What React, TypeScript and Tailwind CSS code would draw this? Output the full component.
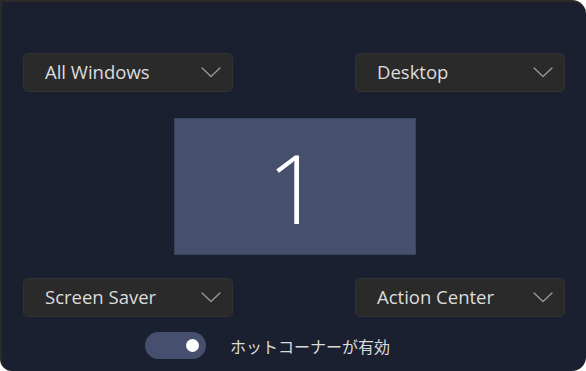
import React from "react";

function Chevron() {
  return (
    <svg width="20" height="11" viewBox="0 0 20 11" fill="none">
      <path d="M1 1 L10 9.5 L19 1" stroke="#9a9a9c" strokeWidth="1.3" strokeLinecap="round" strokeLinejoin="round" />
    </svg>
  );
}

function Dropdown({ label }: { label: string }) {
  return (
    <div className="flex h-[39px] w-[210px] items-center justify-between rounded-[5px] border border-[#323234] bg-[#2a2a2b] pl-[21px] pr-[11px]">
      <span className="text-[18.5px] leading-none text-[#dcdcdc]" style={{ fontFamily: '"Open Sans", "Noto Sans", sans-serif' }}>{label}</span>
      <Chevron />
    </div>
  );
}

export default function App() {
  return (
    <div className="h-[371px] w-[586px] bg-white">
      <div className="flex h-full w-full flex-col rounded-tr-[14px] rounded-bl-[12px] rounded-br-[14px] border-l-2 border-t-2 border-[#2c2a28] bg-[#1b2030] pt-[51px] pl-[21px] pr-[21px]">
        <div className="flex justify-between">
          <Dropdown label="All Windows" />
          <Dropdown label="Desktop" />
        </div>
        <div className="mt-[26px] flex justify-center pl-[1px]">
          <div className="flex h-[137px] w-[242px] items-center justify-center border border-[#3c4560] bg-[#464f6b]">
            <span className="text-[96px] leading-none text-white" style={{ fontFamily: '"Open Sans", "Noto Sans", sans-serif', fontWeight: 300 }}>1</span>
          </div>
        </div>
        <div className="mt-[23px] flex justify-between">
          <Dropdown label="Screen Saver" />
          <Dropdown label="Action Center" />
        </div>
        <div className="mt-[15px] flex items-center pl-[122px]">
          <div className="flex h-[27px] w-[61px] items-center justify-end rounded-full bg-[#474f6e] pr-[7px]">
            <div className="h-[13px] w-[13px] rounded-full bg-white" />
          </div>
          <span className="ml-[24px] text-[16px] text-[#dcdcdc]" style={{ fontFamily: '"Noto Sans CJK JP", sans-serif' }}>ホットコーナーが有効</span>
        </div>
      </div>
    </div>
  );
}
